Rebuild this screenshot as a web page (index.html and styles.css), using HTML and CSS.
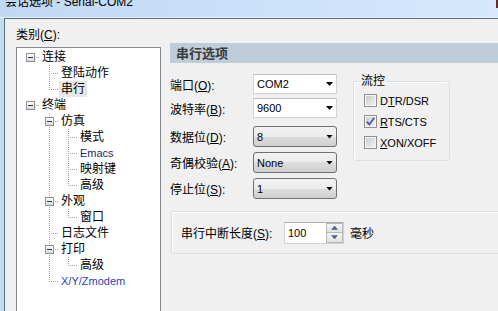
FILE: index.html
```html
<!DOCTYPE html>
<html lang="zh-CN">
<head>
<meta charset="utf-8">
<title>会话选项 - Serial-COM2</title>
<link rel="stylesheet" href="styles.css">
</head>
<body>
<div class="window">
  <div class="titlebar"><span class="title-text">会话选项 - Serial-COM2</span><span class="close-edge"></span></div>
  <div class="frame">
    <div class="frame-edge"></div>
    <div class="client">
      <div class="left">
        <div class="cat-label">类别(<u>C</u>):</div>
        <div class="tree">
          <div class="row"><span class="cell e"><span class="box"></span></span><span class="txt">连接</span></div>
          <div class="row"><span class="cell"></span><span class="cell t"></span><span class="txt">登陆动作</span></div>
          <div class="row"><span class="cell"></span><span class="cell l"></span><span class="txt sel">串行</span></div>
          <div class="row"><span class="cell e"><span class="box"></span></span><span class="txt">终端</span></div>
          <div class="row"><span class="cell"></span><span class="cell t"><span class="box"></span></span><span class="txt">仿真</span></div>
          <div class="row"><span class="cell"></span><span class="cell v"></span><span class="cell t"></span><span class="txt">模式</span></div>
          <div class="row"><span class="cell"></span><span class="cell v"></span><span class="cell t"></span><span class="txt lat emacs">Emacs</span></div>
          <div class="row"><span class="cell"></span><span class="cell v"></span><span class="cell t"></span><span class="txt">映射键</span></div>
          <div class="row"><span class="cell"></span><span class="cell v"></span><span class="cell l"></span><span class="txt">高级</span></div>
          <div class="row"><span class="cell"></span><span class="cell t"><span class="box"></span></span><span class="txt">外观</span></div>
          <div class="row"><span class="cell"></span><span class="cell v"></span><span class="cell l"></span><span class="txt">窗口</span></div>
          <div class="row"><span class="cell"></span><span class="cell t"></span><span class="txt">日志文件</span></div>
          <div class="row"><span class="cell"></span><span class="cell t"><span class="box"></span></span><span class="txt">打印</span></div>
          <div class="row"><span class="cell"></span><span class="cell v"></span><span class="cell l"></span><span class="txt">高级</span></div>
          <div class="row"><span class="cell"></span><span class="cell l"></span><span class="txt lat xyz">X/Y/Zmodem</span></div>
        </div>
      </div>
      <div class="right">
        <div class="section-head">串行选项</div>
        <div class="serial">
          <div class="fields">
            <div class="field f1"><span class="lbl">端口(<u>O</u>):</span><div class="combo edit"><span class="val">COM2</span><span class="arrow"></span></div></div>
            <div class="field f2"><span class="lbl">波特率(<u>B</u>):</span><div class="combo edit"><span class="val">9600</span><span class="arrow"></span></div></div>
            <div class="field f3"><span class="lbl">数据位(<u>D</u>):</span><div class="combo list"><span class="val">8</span><span class="arrow"></span></div></div>
            <div class="field f4"><span class="lbl">奇偶校验(<u>A</u>):</span><div class="combo list"><span class="val">None</span><span class="arrow"></span></div></div>
            <div class="field f5"><span class="lbl">停止位(<u>S</u>):</span><div class="combo list"><span class="val">1</span><span class="arrow"></span></div></div>
          </div>
          <fieldset class="flow">
            <legend>流控</legend>
            <div class="chk"><span class="cb"></span><span class="lat">D<u>T</u>R/DSR</span></div>
            <div class="chk"><span class="cb"><svg width="11" height="11" viewBox="0 0 11 11"><path d="M1.8 5.6 L4.3 8.4 L9.3 1.8" fill="none" stroke="#3f58a6" stroke-width="1.7"/></svg></span><span class="lat"><u>R</u>TS/CTS</span></div>
            <div class="chk"><span class="cb"></span><span class="lat"><u>X</u>ON/XOFF</span></div>
          </fieldset>
        </div>
        <div class="break">
          <span class="brk-lbl">串行中断长度(<u>S</u>):</span>
          <div class="spin">
            <span class="spin-val">100</span>
            <div class="spin-btns">
              <span class="sb up"><span class="tri-up"></span></span>
              <span class="sb down"><span class="tri-down"></span></span>
            </div>
          </div>
          <span class="unit">毫秒</span>
        </div>
      </div>
    </div>
  </div>
</div>
</body>
</html>
```
FILE: styles.css
```css
html, body {
  margin: 0;
  padding: 0;
  overflow: hidden;
}
body {
  width: 498px;
  height: 311px;
  background: #f0f0f0;
  font-family: "Liberation Sans", "Noto Sans CJK SC", sans-serif;
  font-size: 12px;
  color: #000;
}
u {
  text-decoration: underline;
  text-underline-offset: 1px;
}
.window {
  width: 498px;
  height: 311px;
  overflow: hidden;
}
.titlebar {
  height: 17px;
  border-bottom: 1px solid #e6f0fb;
  background: linear-gradient(to right, #c1d8f3, #cbe1f9 50%, #d5e8fd);
  display: flex;
  overflow: hidden;
}
.title-text {
  margin-top: -5px;
  padding-left: 5px;
  line-height: 14px;
  height: 14px;
  font-size: 12px;
  white-space: nowrap;
}
.close-edge {
  margin-left: auto;
  width: 2px;
  height: 8px;
  background: #6b2c25;
}
.frame {
  display: flex;
  height: 293px;
}
.frame-edge {
  width: 4px;
  flex: none;
  background: #c4dbf4;
}
.client {
  flex: 1;
  display: flex;
  border-top: 1px solid #5d6d80;
  border-left: 1px solid #5d6d80;
  overflow: hidden;
}
.left {
  width: 165px;
  flex: none;
  box-sizing: border-box;
  padding-left: 11px;
}
.cat-label {
  margin-top: 9px;
  height: 14px;
  line-height: 14px;
}
.tree {
  margin-top: 5px;
  width: 145px;
  height: 280px;
  box-sizing: border-box;
  border: 1px solid #828790;
  background: #fff;
  padding: 1px 0 0 4px;
}
.row {
  display: flex;
  height: 16px;
  white-space: nowrap;
}
.cell {
  position: relative;
  width: 19px;
  height: 16px;
  flex: none;
}
.cell.v::before, .cell.t::before, .cell.l::before {
  content: "";
  position: absolute;
  left: 9px;
  top: 0;
  width: 1px;
  height: 16px;
  background: linear-gradient(#a0a0a0 50%, transparent 50%);
  background-size: 1px 2px;
}
.cell.l::before {
  height: 9px;
}
.cell.t::after, .cell.l::after, .cell.e::after {
  content: "";
  position: absolute;
  left: 9px;
  right: 0;
  top: 8px;
  height: 1px;
  background: linear-gradient(to right, #a0a0a0 50%, transparent 50%);
  background-size: 2px 1px;
}
.box {
  position: absolute;
  left: 5px;
  top: 4px;
  width: 9px;
  height: 9px;
  box-sizing: border-box;
  border: 1px solid #919191;
  background: linear-gradient(#ffffff, #d9d9d9);
  z-index: 1;
}
.box::after {
  content: "";
  position: absolute;
  left: 1px;
  top: 3px;
  width: 5px;
  height: 1px;
  background: #2a3a55;
}
.txt {
  padding: 0 2px;
  line-height: 16px;
  height: 16px;
}
.txt.sel {
  background: #e6e6e6;
}
.lat {
  font-size: 11px;
}
.txt.emacs {
  color: #1c2470;
}
.txt.xyz {
  color: #1f3fc0;
}
.right {
  flex: 1;
  padding-top: 24px;
  min-width: 0;
}
.section-head {
  height: 20px;
  line-height: 20px;
  padding-left: 6px;
  background: #bfccd9;
  font-family: "Noto Sans CJK SC", sans-serif;
  font-weight: bold;
  font-size: 13px;
  color: #3a3a3a;
}
.serial {
  display: flex;
  margin-top: 11px;
  align-items: flex-start;
}
.fields {
  display: flex;
  flex-direction: column;
  width: 167px;
  flex: none;
}
.field {
  display: flex;
  align-items: center;
}
.f2 { margin-top: 4px; }
.f3 { margin-top: 8px; }
.f4, .f5 { margin-top: 5px; }
.lbl {
  width: 83px;
  flex: none;
  white-space: nowrap;
}
.combo {
  position: relative;
  width: 84px;
  height: 20px;
  box-sizing: border-box;
  display: flex;
  align-items: center;
  padding-left: 3px;
}
.combo.edit {
  background: #fff;
  border: 1px solid #d3d3d3;
  border-top-color: #c0c0c0;
}
.combo.list {
  height: 21px;
  border: 1px solid #707070;
  border-radius: 3px;
  background: linear-gradient(#f2f2f2, #ebebeb 50%, #dddddd 50%, #cfcfcf);
}
.val {
  font-size: 11px;
}
.arrow {
  position: absolute;
  right: 3px;
  top: 50%;
  margin-top: -2px;
  width: 7px;
  height: 4px;
  background: #000;
  clip-path: polygon(0 0, 100% 0, 50% 100%);
}
.flow {
  margin: 0 0 0 16px;
  padding: 2px 0 7px 10px;
  width: 97px;
  box-sizing: border-box;
  border: 1px solid #d5dfe5;
  border-radius: 3px;
  box-shadow: inset 1px 1px 0 #ffffff;
  min-width: 0;
}
.flow legend {
  margin-left: -4px;
  padding: 0 1px;
  line-height: 14px;
  font-size: 12px;
  background: #f0f0f0;
}
.chk {
  display: flex;
  align-items: center;
  height: 21px;
  white-space: nowrap;
}
.cb {
  width: 13px;
  height: 13px;
  box-sizing: border-box;
  margin-right: 3px;
  border: 1px solid #8e8f8f;
  background: linear-gradient(135deg, #c6cad0, #f4f4f4);
  box-shadow: inset 0 0 0 1px #f6f6f6;
  display: flex;
  align-items: center;
  justify-content: center;
  flex: none;
}
.cb svg {
  display: block;
}
.break {
  margin: 12px -20px 0 1px;
  height: 43px;
  box-sizing: border-box;
  border: 1px solid #d5dfe5;
  border-radius: 3px;
  box-shadow: inset 1px 1px 0 #ffffff;
  display: flex;
  align-items: center;
  padding-left: 9px;
}
.brk-lbl {
  width: 103px;
  flex: none;
  white-space: nowrap;
}
.spin {
  width: 60px;
  height: 22px;
  box-sizing: border-box;
  border: 1px solid #d0d3d8;
  border-top-color: #abadb3;
  background: #fff;
  display: flex;
}
.spin-val {
  flex: 1;
  padding-left: 3px;
  line-height: 20px;
  font-size: 11px;
}
.spin-btns {
  width: 17px;
  display: flex;
  flex-direction: column;
}
.sb {
  flex: 1;
  box-sizing: border-box;
  border: 1px solid #b8b8b8;
  background: linear-gradient(#f4f4f4, #e2e2e2);
  display: flex;
  align-items: center;
  justify-content: center;
}
.sb.down {
  border-top: none;
}
.tri-up, .tri-down {
  width: 7px;
  height: 4px;
  background: #4d6185;
}
.tri-up {
  clip-path: polygon(50% 0, 100% 100%, 0 100%);
}
.tri-down {
  clip-path: polygon(0 0, 100% 0, 50% 100%);
}
.unit {
  margin-left: 6px;
}
```
